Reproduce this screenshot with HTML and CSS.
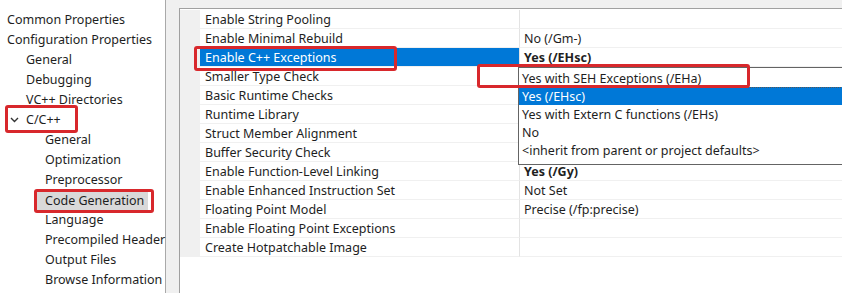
FILE: index.html
```html
<!DOCTYPE html>
<html>
<head>
<meta charset="utf-8">
<link rel="stylesheet" href="styles.css">
</head>
<body>
<div class="app">
  <div class="tree">
    <div class="node l0">Common Properties</div>
    <div class="node l0">Configuration Properties</div>
    <div class="node l1">General</div>
    <div class="node l1">Debugging</div>
    <div class="node l1">VC++ Directories</div>
    <div class="node l0 open"><svg class="chev" width="9" height="6" viewBox="0 0 9 6"><path d="M1 1 L4.5 4.5 L8 1" fill="none" stroke="#333" stroke-width="1.4"/></svg><span class="txt">C/C++</span></div>
    <div class="node l2">General</div>
    <div class="node l2">Optimization</div>
    <div class="node l2">Preprocessor</div>
    <div class="node l2"><span class="sel">Code Generation</span></div>
    <div class="node l2">Language</div>
    <div class="node l2">Precompiled Header</div>
    <div class="node l2">Output Files</div>
    <div class="node l2">Browse Information</div>
  </div>
  <div class="grid">
    <div class="row"><div class="gut"></div><div class="name">Enable String Pooling</div><div class="val"></div></div>
    <div class="row"><div class="gut"></div><div class="name">Enable Minimal Rebuild</div><div class="val">No (/Gm-)</div></div>
    <div class="row active"><div class="gut"></div><div class="name">Enable C++ Exceptions</div><div class="val bold">Yes (/EHsc)</div></div>
    <div class="row"><div class="gut"></div><div class="name">Smaller Type Check</div><div class="val"></div></div>
    <div class="row"><div class="gut"></div><div class="name">Basic Runtime Checks</div><div class="val"></div></div>
    <div class="row"><div class="gut"></div><div class="name">Runtime Library</div><div class="val"></div></div>
    <div class="row"><div class="gut"></div><div class="name">Struct Member Alignment</div><div class="val"></div></div>
    <div class="row"><div class="gut"></div><div class="name">Buffer Security Check</div><div class="val"></div></div>
    <div class="row"><div class="gut"></div><div class="name">Enable Function-Level Linking</div><div class="val bold">Yes (/Gy)</div></div>
    <div class="row"><div class="gut"></div><div class="name">Enable Enhanced Instruction Set</div><div class="val">Not Set</div></div>
    <div class="row"><div class="gut"></div><div class="name">Floating Point Model</div><div class="val">Precise (/fp:precise)</div></div>
    <div class="row"><div class="gut"></div><div class="name">Enable Floating Point Exceptions</div><div class="val"></div></div>
    <div class="row"><div class="gut"></div><div class="name">Create Hotpatchable Image</div><div class="val"></div></div>
  </div>
</div>
<div class="dropdown">
  <div class="opt">Yes with SEH Exceptions (/EHa)</div>
  <div class="opt hl">Yes (/EHsc)</div>
  <div class="opt">Yes with Extern C functions (/EHs)</div>
  <div class="opt">No</div>
  <div class="opt">&lt;inherit from parent or project defaults&gt;</div>
</div>
<div class="mark m-cpp"></div>
<div class="mark m-codegen"></div>
<div class="mark m-exc"></div>
<div class="mark m-seh"></div>
</body>
</html>
```

FILE: styles.css
```css
html, body {
  margin: 0;
  padding: 0;
  width: 842px;
  height: 293px;
  overflow: hidden;
  background: #f0f0f0;
  font-family: "Noto Sans", "Open Sans", sans-serif;
  font-size: 12.5px;
  color: #1e1e1e;
}
.app {
  display: flex;
  align-items: flex-start;
  height: 293px;
  overflow: hidden;
}
.tree {
  width: 166px;
  height: 293px;
  box-sizing: border-box;
  background: #fff;
  border-right: 1px solid #a9a9a9;
  padding-top: 10px;
  flex: none;
}
.node {
  height: 20px;
  line-height: 20px;
  white-space: nowrap;
  display: flex;
  align-items: center;
}
.l0 { padding-left: 7px; }
.l1 { padding-left: 26px; }
.l2 { padding-left: 45px; }
.open { padding-left: 10px; }
.chev { margin-right: 7px; }
.sel {
  background: #d9d9d9;
  margin-left: -8px;
  padding: 0 4px 0 8px;
  line-height: 19px;
}
.grid {
  margin-top: 8px;
  margin-left: 13px;
  flex: 1;
  height: 285px;
  background: #fff;
  border-left: 1px solid #a0a0a0;
  border-top: 1px solid #a0a0a0;
  padding-top: 1px;
  box-sizing: border-box;
}
.row {
  display: flex;
  height: 19px;
  line-height: 20px;
}
.gut {
  width: 20px;
  background: #f0f0f0;
  flex: none;
}
.name {
  width: 319px;
  flex: none;
  box-sizing: border-box;
  padding-left: 5px;
  border-bottom: 1px solid #f0f0f0;
  white-space: nowrap;
}
.val {
  flex: 1;
  padding-left: 4px;
  border-left: 1px solid #e3e3e3;
  border-bottom: 1px solid #f0f0f0;
  white-space: nowrap;
}
.bold { font-weight: bold; }
.active .name {
  background: #0078d7;
  color: #fff;
}
.dropdown {
  position: absolute;
  left: 518px;
  top: 67px;
  width: 340px;
  height: 98px;
  background: #fff;
  border: 1px solid #646464;
  padding-top: 1px;
  box-sizing: border-box;
}
.opt {
  height: 18px;
  line-height: 19px;
  padding-left: 3px;
  white-space: nowrap;
}
.opt.hl {
  background: #0078d7;
  color: #fff;
  border-top: 1px dotted #555;
  height: 17px;
  line-height: 18px;
}
.mark {
  position: absolute;
  border: 3px solid #d8282c;
  border-radius: 3px;
  box-sizing: border-box;
}
.m-cpp { left: 5px; top: 105px; width: 73px; height: 28px; }
.m-codegen { left: 34px; top: 189px; width: 120px; height: 24px; }
.m-exc { left: 194px; top: 46px; width: 203px; height: 25px; }
.m-seh { left: 477px; top: 64px; width: 273px; height: 24px; }
```
